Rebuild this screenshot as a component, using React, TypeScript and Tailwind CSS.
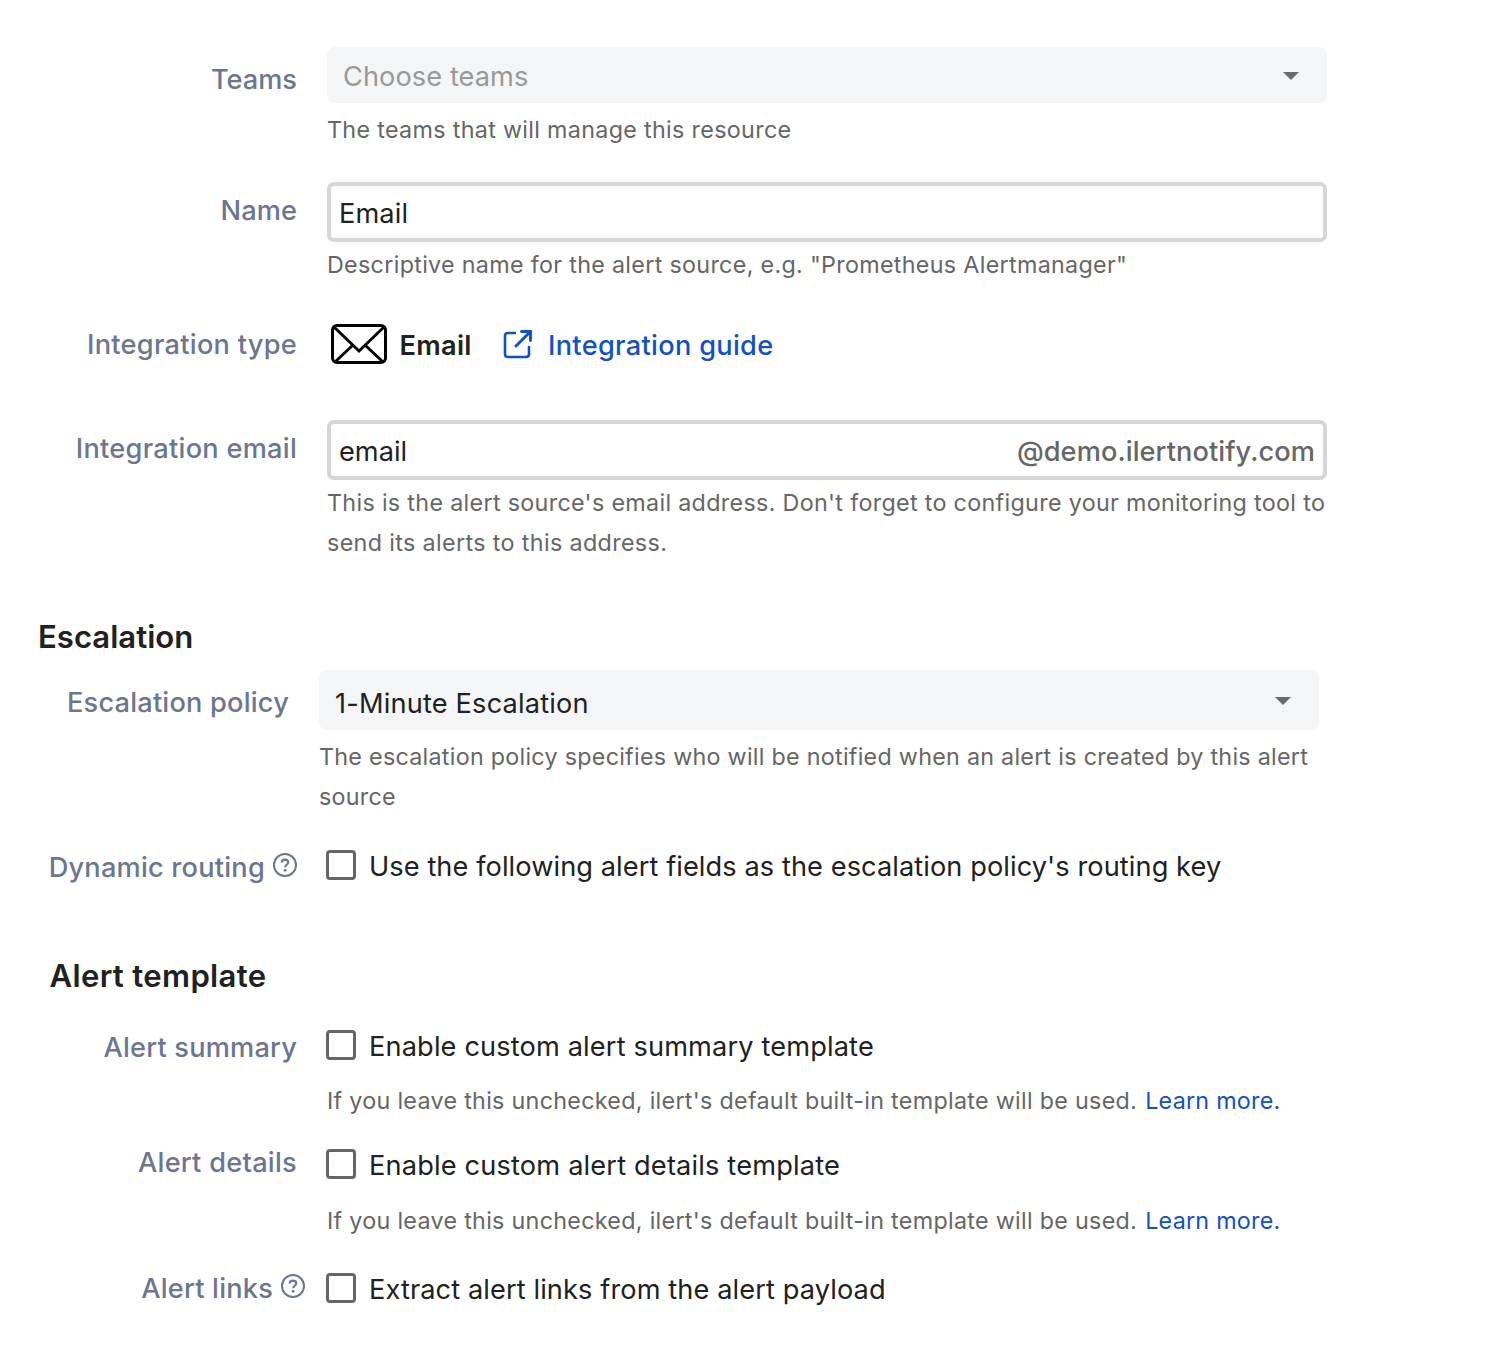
import React from "react";

type BoxProps = { className: string; children: React.ReactNode };

function Label({ className, children }: BoxProps) {
  return <div className={`flex shrink-0 justify-end whitespace-nowrap text-[27.2px] font-medium leading-[40px] text-[#6c7690] ${className}`}>{children}</div>;
}

function Hint({ className, children }: BoxProps) {
  return <p className={`whitespace-nowrap text-[23.3px] leading-[40px] text-[#666666] ${className}`}>{children}</p>;
}

function Caret() {
  return (
    <svg className="mt-[2px]" width="16" height="8" viewBox="0 0 16 8">
      <path d="M0 0h16L8 8z" fill="#6b6b6b" />
    </svg>
  );
}

function Help({ className }: { className: string }) {
  return (
    <svg className={`shrink-0 ${className}`} width="24" height="24" viewBox="0 0 24 24" fill="none" stroke="#6c7690" strokeWidth="2">
      <circle cx="12" cy="12" r="11" />
      <path d="M8.800 9.600c0-2 1.400-3 3.200-3s3.200 1.100 3.200 2.800c0 2.300-3.100 2.400-3.100 4.900" strokeWidth="2.200" />
      <circle cx="12.100" cy="17.300" r="1.400" fill="#6c7690" stroke="none" />
    </svg>
  );
}

function Check() {
  return <span role="checkbox" aria-checked="false" className="mr-[13px] block size-[30px] shrink-0 rounded-[4px] border-3 border-[#666] bg-white" />;
}

function Option({ children }: { children: React.ReactNode }) {
  return <span className="-mt-[3px] whitespace-nowrap text-[27.2px] leading-[40px]">{children}</span>;
}

function TemplateHint({ className }: { className: string }) {
  return (
    <Hint className={`pl-px ${className}`}>
      <span className="tracking-[0.295px]">If you leave this unchecked, ilert's default built-in template will be used.</span>{" "}
      <a className="ml-[1.5px] tracking-[0.25px] text-[#1350c7]">Learn more.</a>
    </Hint>
  );
}

const input = "flex h-[60px] w-[1000px] items-center justify-between rounded-[7px] border-4 border-[#d5d6d8] px-[8px] pt-[5px] text-[27.2px]";

export default function App() {
  return (
    <main className="h-[1350px] w-[1498px] overflow-hidden bg-white pt-[47px] font-['Inter',sans-serif] text-[#212121]">
      <section className="flex h-[135px]">
        <Label className="mr-[30px] w-[297px] pt-[13px]">Teams</Label>
        <div>
          <div className="flex h-[56px] w-[1000px] items-center justify-between rounded-[8px] bg-[#f4f5f7] pl-[16px] pr-[28px]">
            <span className="pt-[5px] text-[27.2px] tracking-[0.07px] text-[#999]">Choose teams</span>
            <Caret />
          </div>
          <Hint className="mt-[7px] tracking-[0.32px]">The teams that will manage this resource</Hint>
        </div>
      </section>
      <section className="flex h-[138px]">
        <Label className="mr-[30px] w-[297px] pt-[9px] tracking-[0.1px]">Name</Label>
        <div>
          <div className={input}><span className="tracking-[0.1px]">Email</span></div>
          <Hint className="mt-[3px] tracking-[0.31px]">Descriptive name for the alert source, e.g. "Prometheus Alertmanager"</Hint>
        </div>
      </section>
      <section className="flex h-[100px]">
        <Label className="mr-[34px] w-[297px] pt-[5px] tracking-[0.26px]">Integration type</Label>
        <svg className="mt-[4px] shrink-0" width="56" height="40" viewBox="0 0 56 40" fill="none" stroke="#000" strokeWidth="3">
          <rect x="1.500" y="1.500" width="53" height="37" rx="4.500" />
          <path d="M3 3l25 24L53 3M4.500 37.500l17-16M51.500 37.500l-17-16" strokeWidth="2.900" />
        </svg>
        <span className="ml-[12.5px] w-[103.5px] pt-[6px] text-[27.2px] font-semibold leading-[40px] tracking-[0.3px]">Email</span>
        <svg className="mt-[10px] shrink-0" width="29" height="29" viewBox="0 0 29 29" fill="none" stroke="#1350c7" strokeWidth="2.600" strokeLinecap="round" strokeLinejoin="round">
          <path d="M12 3H5Q2 3 2 6v18q0 3 3 3h18q3 0 3-3v-7" />
          <path d="M18.500 1.500h9v9M27 2L13 16" strokeWidth="2.900" strokeLinejoin="miter" />
        </svg>
        <a className="ml-[16px] pt-[6px] text-[27.2px] font-medium leading-[40px] tracking-[0.3px] text-[#1350c7]">Integration guide</a>
      </section>
      <section className="flex h-[195px]">
        <Label className="mr-[30px] w-[297px] pt-[9px] tracking-[0.26px]">Integration email</Label>
        <div>
          <div className={input}><span>email</span><span className="font-medium tracking-[0.08px] text-[#666]">@demo.ilertnotify.com</span></div>
          <Hint className="mt-[3px] tracking-[0.32px]">This is the alert source's email address. Don't forget to configure your monitoring tool to<br /><span className="tracking-[0.36px]">send its alerts to this address.</span></Hint>
        </div>
      </section>
      <h2 className="h-[55px] pl-[38px] pt-[2px] text-[31.100px] font-semibold leading-[40px]">Escalation</h2>
      <section className="flex h-[180px]">
        <Label className="mr-[30px] w-[289px] pt-[13px] tracking-[0.2px]">Escalation policy</Label>
        <div>
          <div className="flex h-[60px] w-[1000px] items-center justify-between rounded-[8px] bg-[#f4f5f7] pl-[16px] pr-[28px]">
            <span className="pt-[8px] text-[27.2px] tracking-[0.18px]">1-Minute Escalation</span><Caret />
          </div>
          <Hint className="mt-[7px] tracking-[0.27px]">The escalation policy specifies who will be notified when an alert is created by this alert<br />source</Hint>
        </div>
      </section>
      <section className="flex h-[105px]">
        <Label className="mr-[29px] w-[297px]"><span className="-mt-[2px] tracking-[0.22px]">Dynamic routing</span><Help className="ml-[8px] mt-[3px]" /></Label>
        <Check />
        <Option><span className="tracking-[0.08px]">Use the following alert fields as the escalation policy's routing key</span></Option>
      </section>
      <h2 className="h-[75px] pl-[49.5px] pt-[1px] text-[31.100px] font-semibold leading-[40px] tracking-[0.33px]">Alert template</h2>
      <section className="flex h-[119px]">
        <Label className="mr-[29px] w-[297px]"><span className="-mt-[2px] tracking-[0.2px]">Alert summary</span></Label>
        <div>
          <div className="flex"><Check /><Option><span className="tracking-[0.14px]">Enable custom alert summary template</span></Option></div>
          <TemplateHint className="mt-[14px]" />
        </div>
      </section>
      <section className="flex h-[124px]">
        <Label className="mr-[29px] w-[297px]"><span className="-mt-[6px] tracking-[0.27px]">Alert details</span></Label>
        <div>
          <div className="flex"><Check /><Option><span className="tracking-[0.17px]">Enable custom alert details template</span></Option></div>
          <TemplateHint className="mt-[15px]" />
        </div>
      </section>
      <section className="flex">
        <Label className="mr-[21px] w-[305px]"><span className="-mt-[4px] tracking-[0.2px]">Alert links</span><Help className="ml-[8px] mt-[1px]" /></Label>
        <Check />
        <Option><span className="tracking-[0.1px]">Extract alert links from the alert payload</span></Option>
      </section>
    </main>
  );
}
